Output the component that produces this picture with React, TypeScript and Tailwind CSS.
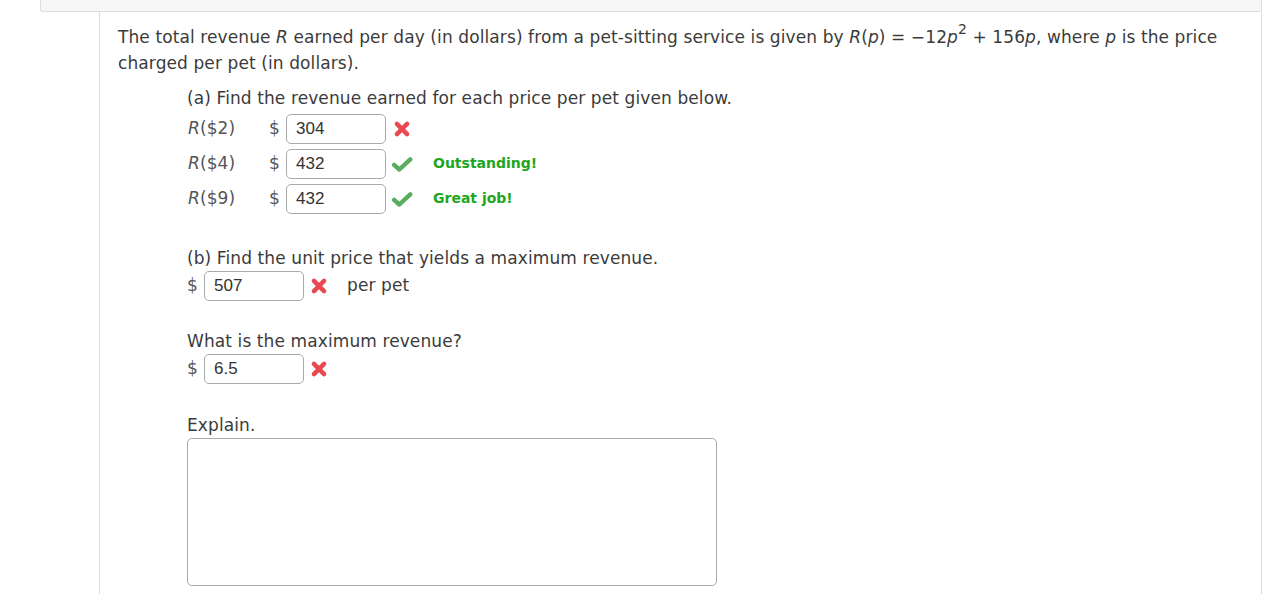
import React from "react";

const TEXT_FONT = { fontFamily: '"DejaVu Sans", Verdana, sans-serif' };

function WrongIcon({ className = "" }: { className?: string }) {
  return (
    <svg viewBox="0 0 16 16" className={className} width="18" height="18">
      <path d="M3.5 3.5 L12.5 12.5 M12.5 3.5 L3.5 12.5" stroke="#e8484f" strokeWidth="4" strokeLinecap="round" fill="none" />
    </svg>
  );
}

function RightIcon({ className = "" }: { className?: string }) {
  return (
    <svg viewBox="0 0 20 16" className={className} width="22" height="18">
      <path d="M2.8 8.8 L7.6 13 L17.5 3.8" stroke="#5aad5e" strokeWidth="4" strokeLinecap="round" strokeLinejoin="round" fill="none" />
    </svg>
  );
}

function AnswerBox({ value, width = "w-[100px]" }: { value: string; width?: string }) {
  return (
    <div
      className={`${width} h-[30px] border border-[#a9a9a9] rounded-[5px] bg-white pl-[9px] flex items-center text-[17px] tracking-normal text-[#333]`}
      style={{ fontFamily: '"Liberation Sans", Arial, sans-serif' }}
    >
      {value}
    </div>
  );
}

const rows = [
  { price: "2", value: "304", ok: false, note: "" },
  { price: "4", value: "432", ok: true, note: "Outstanding!" },
  { price: "9", value: "432", ok: true, note: "Great job!" },
];

export default function App() {
  return (
    <div className="w-[1284px] h-[594px] overflow-hidden bg-white text-[#3b3b3b] text-[17px] tracking-[0.1px]" style={TEXT_FONT}>
      <div className="ml-[40px] mr-[22px] h-[12px] bg-[#f6f6f6] border border-t-0 border-[#dedede] rounded-b-[3px]" />

      <div className="ml-[99px] mr-[22px] h-[582px] border-l border-r border-[#dddddd] pl-[18px] pt-[12px]">
        <p className="leading-[26px]">
          The total revenue <i>R</i> earned per day (in dollars) from a pet-sitting service is given by{" "}
          <i>R</i>(<i>p</i>) = −12<i>p</i>
          <sup className="text-[14px] top-[-0.65em]">2</sup> + 156<i>p</i>, where <i>p</i> is the price charged per pet (in dollars).
        </p>

        <div className="pl-[69px]">
          <p className="leading-[26px] mt-[9px]">(a) Find the revenue earned for each price per pet given below.</p>

          {rows.map((r) => (
            <div key={r.price} className="h-[35px] flex items-center">
              <span className="w-[82px] pl-[1px] text-[#555]">
                <i>R</i>(${r.price})
              </span>
              <span className="w-[17px] text-[#555]">$</span>
              <AnswerBox value={r.value} />
              {r.ok ? <RightIcon className="ml-[5px]" /> : <WrongIcon className="ml-[7px]" />}
              {r.note && (
                <span className="ml-[20px] text-[14px] font-bold tracking-normal text-[#1ea61e]">{r.note}</span>
              )}
            </div>
          ))}

          <p className="leading-[26px] mt-[29px]">(b) Find the unit price that yields a maximum revenue.</p>
          <div className="h-[30px] flex items-center">
            <span className="w-[17px] text-[#555]">$</span>
            <AnswerBox value="507" />
            <WrongIcon className="ml-[6px]" />
            <span className="ml-[19px]">per pet</span>
          </div>

          <p className="leading-[26px] mt-[27px]">What is the maximum revenue?</p>
          <div className="h-[30px] flex items-center">
            <span className="w-[17px] text-[#555]">$</span>
            <AnswerBox value="6.5" />
            <WrongIcon className="ml-[6px]" />
          </div>

          <p className="leading-[26px] mt-[28px]">Explain.</p>
          <div className="w-[530px] h-[148px] border border-[#a9a9a9] rounded-[5px] bg-white" />
        </div>
      </div>
    </div>
  );
}
